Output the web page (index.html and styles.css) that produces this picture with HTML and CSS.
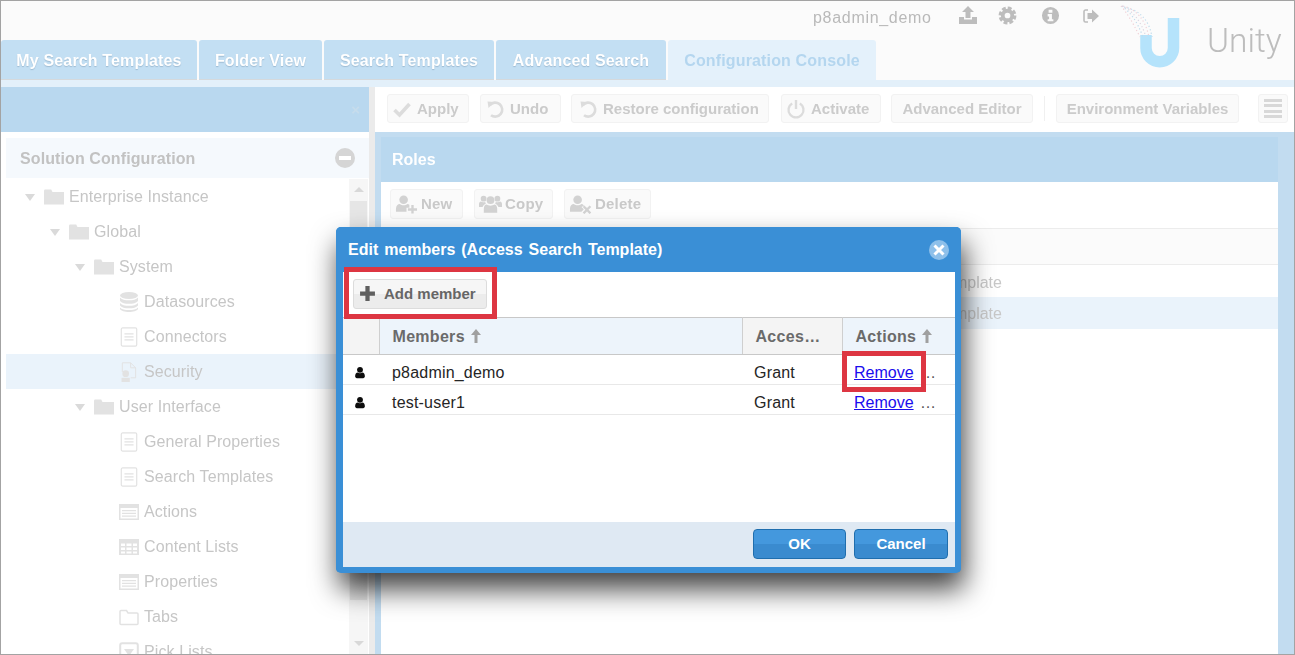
FILE: index.html
```html
<!DOCTYPE html>
<html lang="en">
<head>
<meta charset="utf-8">
<title>Unity - Edit members</title>
<link rel="stylesheet" href="styles.css">
</head>
<body>
<svg class="defs" width="0" height="0" aria-hidden="true">
  <symbol id="i-user" viewBox="0 0 16 16"><circle cx="8" cy="4.4" r="3.9"/><path d="M1.5 13c0-3 1.4-5 3.4-5 .8.7 1.9 1.1 3.1 1.1s2.300-.4 3.100-1.100c2 0 3.400 2 3.400 5 0 1.500-1 2.500-2.400 2.500H3.900c-1.400 0-2.400-1-2.400-2.500z"/></symbol>
  <symbol id="i-plus" viewBox="0 0 16 16"><path d="M6 1h4v5h5v4h-5v5H6v-5H1V6h5z"/></symbol>
  <symbol id="i-up" viewBox="0 0 12 16"><path d="M4.500 15V7H1l5-6 5 6H7.500v8z"/></symbol>
  <symbol id="i-upload" viewBox="0 0 20 20"><path d="M10 1l6 6h-3.500v6h-5V7H4z"/><path d="M1 12h5v2.500h8V12h5v7H1z"/></symbol>
  <symbol id="i-cog" viewBox="0 0 20 20"><circle cx="10" cy="10" r="5" fill="none" stroke="currentColor" stroke-width="4"/><circle cx="10" cy="10" r="7.700" fill="none" stroke="currentColor" stroke-width="3.400" stroke-dasharray="4 2.050"/></symbol>
  <symbol id="i-info" viewBox="0 0 20 20"><path fill-rule="evenodd" d="M10 1a9 9 0 1 1 0 18a9 9 0 0 1 0-18zM8 4v3h4V4zM7 8.500V11h1.500v3H7v2h6v-2h-1.500V8.500z"/></symbol>
  <symbol id="i-out" viewBox="0 0 20 20"><path d="M7 4H4.500C3.700 4 3 4.700 3 5.500v9c0 .8.7 1.500 1.500 1.500H7" fill="none" stroke="currentColor" stroke-width="1.600"/><path d="M11 3.500l7 6.500-7 6.500V13H6.500V7H11z"/></symbol>
  <symbol id="i-check" viewBox="0 0 20 20"><path d="M2.500 11l5 5 10-11" fill="none" stroke="currentColor" stroke-width="3.600"/></symbol>
  <symbol id="i-undo" viewBox="0 0 20 20"><path d="M4.800 6.200A7 7 0 1 1 6 16.200" fill="none" stroke="currentColor" stroke-width="2.600"/><path d="M2.500 2.500l7 .5-6 6z"/></symbol>
  <symbol id="i-power" viewBox="0 0 20 20"><path d="M6.200 4.500a7.500 7.500 0 1 0 7.600 0" fill="none" stroke="currentColor" stroke-width="2.300"/><path d="M8.800 1h2.400v9H8.800z"/></symbol>
  <symbol id="i-uplus" viewBox="0 0 24 20"><circle cx="9" cy="5.500" r="4.500"/><path d="M1 18v-3c0-3 2-5 4-5 1 .8 2.500 1.300 4 1.300s3-.5 4-1.300c.8 0 1.500.2 2 .7V14h-3v4z"/><path d="M17 11h2.500v3.500H23V17h-3.500v3H17v-3h-3.500v-2.500H17z"/></symbol>
  <symbol id="i-users" viewBox="0 0 24 20"><circle cx="12" cy="6" r="4"/><circle cx="4.800" cy="4.500" r="3"/><circle cx="19.200" cy="4.500" r="3"/><path d="M5 19v-4c0-3 1.500-4.500 3-4.500 1 .8 2.500 1.200 4 1.200s3-.4 4-1.200c1.500 0 3 1.500 3 4.500v4z"/><path d="M0 13V10c0-1.500 1-2.500 2-2.500 1 .7 3 .8 4.500.3.100.8.400 1.300.8 1.700C5.500 10.500 4 12 3.800 13zM24 13v-3c0-1.500-1-2.500-2-2.500-1 .7-3 .8-4.500.3-.1.8-.4 1.300-.8 1.700 1.800 1 3.300 2.500 3.500 3.500z"/></symbol>
  <symbol id="i-ux" viewBox="0 0 24 20"><circle cx="9" cy="5.500" r="4.500"/><path d="M1 18v-3c0-3 2-5 4-5 1 .8 2.500 1.300 4 1.300s3-.5 4-1.300c1 0 2 .7 2.600 1.800L13 13l2.500 2.500-2.500 2.500z"/><path d="M16 11.500l2.800 2.800 2.700-2.800 1.700 1.700-2.800 2.800 2.800 2.800-1.700 1.700-2.700-2.800-2.800 2.800-1.700-1.700 2.800-2.800-2.800-2.800z"/></symbol>
  <symbol id="i-folder" viewBox="0 0 20 18"><path d="M0 3c0-.8.500-1.500 1.200-1.500h6L8.500 4H20v12.500H0z"/></symbol>
  <symbol id="i-folder-o" viewBox="0 0 20 18"><path d="M1 15.500V3.500C1 3 1.300 2.500 2 2.500h5.500L9 5h9c.6 0 1 .4 1 1v9.500c0 .6-.4 1-1 1H2c-.7 0-1-.5-1-1z" fill="none" stroke="currentColor" stroke-width="1.500"/></symbol>
  <symbol id="i-db" viewBox="0 0 20 20"><ellipse cx="10" cy="3.500" rx="9" ry="3.500"/><path d="M1 5.500c1.500 2 5 2.800 9 2.800s7.500-.8 9-2.800V9c-1.500 2-5 2.800-9 2.800S2.500 11 1 9z"/><path d="M1 11c1.500 2 5 2.800 9 2.800s7.500-.8 9-2.800v2.500c-1.500 2-5 2.800-9 2.800s-7.500-.8-9-2.800z"/><path d="M1 15.500c1.500 2 5 2.500 9 2.500s7.500-.5 9-2.500V17c-1 2-5 3-9 3s-8-1-9-3z"/></symbol>
  <symbol id="i-doc" viewBox="0 0 20 22"><rect x="1.500" y="1" width="17" height="20" rx="1.500" fill="none" stroke="currentColor" stroke-width="1.300"/><path d="M5 7h10v1.300H5zM5 10.300h10v1.300H5zM5 13.600h10v1.300H5z"/></symbol>
  <symbol id="i-sec" viewBox="0 0 20 24"><path d="M2 1h10l6 6v12h-6M2 12V1M12 1v6h6" fill="none" stroke="currentColor" stroke-width="1.200"/><circle cx="6" cy="14" r="4"/><path d="M1 24v-5h10v5z"/></symbol>
  <symbol id="i-list" viewBox="0 0 20 18"><path fill-rule="evenodd" d="M0 1h20v16H0zM1.500 5v10.500h17V5zM3 7h14v1.200H3zM3 9.800h14V11H3zM3 12.500h14v1.200H3z"/></symbol>
  <symbol id="i-grid" viewBox="0 0 20 18"><path fill-rule="evenodd" d="M0 1h20v16H0zM2 5.500V8h4V5.500zM7.500 5.500V8h5V5.500zM14 5.500V8h4V5.500zM2 9.500V12h4V9.500zM7.500 9.500V12h5V9.500zM14 9.500V12h4V9.500zM2 13.500V15.500h4V13.500zM7.500 13.500V15.500h5V13.500zM14 13.500V15.500h4V13.500z"/></symbol>
  <symbol id="i-pick" viewBox="0 0 20 20"><rect x="1.200" y="1.200" width="17.600" height="17.600" rx="2" fill="none" stroke="currentColor" stroke-width="2"/><path d="M5 7h10l-5 7z"/></symbol>
</svg>

<div class="frame">
  <div class="page">
    <header class="header">
      <div class="topbar">
        <span class="user-name">p8admin_demo</span>
        <svg class="top-icon icon-upload"><use href="#i-upload"/></svg>
        <svg class="top-icon icon-cog"><use href="#i-cog"/></svg>
        <svg class="top-icon icon-info"><use href="#i-info"/></svg>
        <svg class="top-icon icon-out"><use href="#i-out"/></svg>
      </div>
      <nav class="tabs">
        <a class="tab tab-a">My Search Templates</a>
        <a class="tab tab-b">Folder View</a>
        <a class="tab tab-c">Search Templates</a>
        <a class="tab tab-d">Advanced Search</a>
        <a class="tab tab-active">Configuration Console</a>
      </nav>
      <div class="brand">
        <svg class="brand-mark" viewBox="0 0 70 70">
          <path class="brand-u" d="M54.500 17V47a13.750 13.750 0 0 1-27.500 0V34"/>
          <path class="dots d1" d="M2 5C8 12 13 20 21 36"/>
          <path class="dots d2" d="M3 5C12 12 18 20 24 36"/>
          <path class="dots d3" d="M3 5C14 10 22 20 27 36"/>
          <path class="dots d1" d="M4 5C18 9 26 18 30 36"/>
          <path class="dots d2" d="M5 6C20 9 30 18 33 36"/>
        </svg>
        <span class="brand-name">Unity</span>
      </div>
    </header>

    <main class="main">
      <aside class="side">
        <div class="side-head"><span class="side-close">&times;</span></div>
        <div class="sol-head"><span>Solution Configuration</span><span class="sol-toggle"></span></div>
        <div class="side-body">
          <ul class="tree">
            <li class="node l0"><i class="caret"></i><svg class="ti"><use href="#i-folder"/></svg>Enterprise Instance</li>
            <li class="node l1"><i class="caret"></i><svg class="ti"><use href="#i-folder"/></svg>Global</li>
            <li class="node l2"><i class="caret"></i><svg class="ti"><use href="#i-folder"/></svg>System</li>
            <li class="node l3"><i class="nocaret"></i><svg class="ti"><use href="#i-db"/></svg>Datasources</li>
            <li class="node l3"><i class="nocaret"></i><svg class="ti"><use href="#i-doc"/></svg>Connectors</li>
            <li class="node l3 selected"><i class="nocaret"></i><svg class="ti"><use href="#i-sec"/></svg>Security</li>
            <li class="node l2"><i class="caret"></i><svg class="ti"><use href="#i-folder"/></svg>User Interface</li>
            <li class="node l3"><i class="nocaret"></i><svg class="ti"><use href="#i-doc"/></svg>General Properties</li>
            <li class="node l3"><i class="nocaret"></i><svg class="ti"><use href="#i-doc"/></svg>Search Templates</li>
            <li class="node l3"><i class="nocaret"></i><svg class="ti"><use href="#i-list"/></svg>Actions</li>
            <li class="node l3"><i class="nocaret"></i><svg class="ti"><use href="#i-grid"/></svg>Content Lists</li>
            <li class="node l3"><i class="nocaret"></i><svg class="ti"><use href="#i-list"/></svg>Properties</li>
            <li class="node l3"><i class="nocaret"></i><svg class="ti"><use href="#i-folder-o"/></svg>Tabs</li>
            <li class="node l3"><i class="nocaret"></i><svg class="ti"><use href="#i-pick"/></svg>Pick Lists</li>
          </ul>
          <div class="scrollbar">
            <i class="sb-up"></i>
            <div class="sb-thumb"></div>
            <i class="sb-down"></i>
          </div>
        </div>
      </aside>
      <div class="splitter"></div>
      <section class="content">
        <div class="toolbar">
          <button class="tb tb-apply"><svg class="tb-i"><use href="#i-check"/></svg>Apply</button>
          <button class="tb tb-undo"><svg class="tb-i"><use href="#i-undo"/></svg>Undo</button>
          <button class="tb tb-restore"><svg class="tb-i"><use href="#i-undo"/></svg>Restore configuration</button>
          <button class="tb tb-activate"><svg class="tb-i"><use href="#i-power"/></svg>Activate</button>
          <button class="tb tb-adv">Advanced Editor</button>
          <span class="tb-sep"></span>
          <button class="tb tb-env">Environment Variables</button>
          <button class="tb tb-menu"><span class="bars"></span></button>
        </div>
        <div class="roles">
          <h2 class="roles-head">Roles</h2>
          <div class="roles-body">
            <div class="roles-actions">
              <button class="rb rb-new"><svg class="rb-i"><use href="#i-uplus"/></svg>New</button>
              <button class="rb rb-copy"><svg class="rb-i"><use href="#i-users"/></svg>Copy</button>
              <button class="rb rb-del"><svg class="rb-i"><use href="#i-ux"/></svg>Delete</button>
            </div>
            <div class="roles-hdr"></div>
            <div class="roles-row"><span>Template</span></div>
            <div class="roles-row sel"><span>Template</span></div>
          </div>
        </div>
      </section>
    </main>
  </div>

  <div class="modal" role="dialog">
    <div class="modal-title">
      <span>Edit members (Access Search Template)</span>
      <svg class="modal-close" viewBox="0 0 20 20"><circle cx="10" cy="10" r="10"/><path d="M5.500 5.500l9 9M14.500 5.500l-9 9"/></svg>
    </div>
    <div class="modal-tools">
      <button class="add-btn"><svg class="add-i"><use href="#i-plus"/></svg>Add member</button>
    </div>
    <table class="members">
      <colgroup><col class="c0"><col class="c1"><col class="c2"><col class="c3"></colgroup>
      <thead>
        <tr>
          <th class="th-plain"></th>
          <th class="th-sort">Members <svg class="sort-i"><use href="#i-up"/></svg></th>
          <th class="th-plain">Acces…</th>
          <th class="th-sort">Actions <svg class="sort-i"><use href="#i-up"/></svg></th>
        </tr>
      </thead>
      <tbody>
        <tr>
          <td><svg class="u-i"><use href="#i-user"/></svg></td>
          <td>p8admin_demo</td>
          <td class="td-grant">Grant</td>
          <td class="td-act"><a class="link" href="#">Remove</a> <span class="more">…</span></td>
        </tr>
        <tr>
          <td><svg class="u-i"><use href="#i-user"/></svg></td>
          <td>test-user1</td>
          <td class="td-grant">Grant</td>
          <td class="td-act"><a class="link" href="#">Remove</a> <span class="more">…</span></td>
        </tr>
      </tbody>
    </table>
    <div class="modal-foot">
      <button class="pri pri-ok">OK</button>
      <button class="pri pri-cancel">Cancel</button>
    </div>
  </div>

  <div class="callout callout-add"></div>
  <div class="callout callout-remove"></div>
</div>
</body>
</html>
```

FILE: styles.css
```css
* { box-sizing: border-box; }
html, body { margin: 0; padding: 0; }
body { font-family: "Liberation Sans", Arial, sans-serif; font-size: 16px; background: #fff; }
.defs { position: absolute; }
button { font-family: inherit; }
svg { fill: currentColor; display: block; }

.frame { position: relative; width: 1295px; height: 655px; border: 1px solid #a3a3a3; overflow: hidden; background: #fff; }
.page { display: flex; flex-direction: column; height: 100%; filter: blur(.35px); }

/* header */
.header { position: relative; flex: none; height: 79px; background: #fbfbfb; display: flex; flex-direction: column; }
.topbar { height: 39px; display: flex; align-items: flex-start; padding: 8px 0 0 812px; color: #bdbdbd; }
.user-name { font-size: 16px; letter-spacing: .7px; color: #b9b9b9; width: 118px; line-height: 18px; margin-right: 27px; white-space: nowrap; }
.top-icon { flex: none; }
.icon-upload { width: 20px; height: 20px; margin-right: 20px; margin-top: -4px; }
.icon-cog { width: 19px; height: 19px; margin-right: 24px; margin-top: -3px; }
.icon-info { width: 19px; height: 19px; margin-right: 21px; margin-top: -3px; }
.icon-out { width: 20px; height: 20px; margin-top: -3px; }
.tabs { display: flex; gap: 2px; height: 40px; }
.tab { height: 40px; display: flex; align-items: center; justify-content: center; padding-top: 2px; background: #c3dff3; border-radius: 3px 3px 0 0; color: #fff; font-weight: 700; font-size: 16px; letter-spacing: .15px; text-shadow: 0 1px 1px rgba(90,120,150,.35); box-shadow: inset 0 -1px 0 #d5d9dc; }
.tab-a { width: 196px; }
.tab-b { width: 123px; }
.tab-c { width: 170px; }
.tab-d { width: 170px; }
.tab-active { width: 208px; background: #e4f1fb; color: #b4d6ef; text-shadow: none; box-shadow: none; }
.brand { position: absolute; right: 0; top: 0; width: 175px; height: 79px; }
.brand-mark { position: absolute; left: 0; top: 0; width: 70px; height: 70px; }
.brand-u { fill: none; stroke: #b5e3fb; stroke-width: 11.500; }
.dots { fill: none; stroke-width: 1.200; stroke-dasharray: 1.200 2.400; }
.d1 { stroke: #f0d0d6; }
.d2 { stroke: #c0dcec; }
.d3 { stroke: #dcd6e2; }
.brand-name { position: absolute; left: 88px; top: 20px; font-family: Roboto, sans-serif; font-weight: 300; font-size: 33.500px; line-height: 40px; color: #bdbdbd; white-space: nowrap; }

/* main */
.main { flex: 1; min-height: 0; display: flex; background: #e3f0fa; padding-top: 7px; overflow: hidden; }
.side { width: 368px; flex: none; background: #fff; display: flex; flex-direction: column; }
.side-head { height: 45px; flex: none; background: #b9d8ef; display: flex; align-items: center; justify-content: flex-end; padding-right: 9px; }
.side-close { color: #c6dcec; font-size: 15px; font-weight: 700; }
.sol-head { flex: none; height: 40px; margin: 6px 0 1px 5px; padding: 2px 14px 0 14px; background: #f5f9fd; color: #c2c2c2; font-weight: 700; font-size: 16px; display: flex; align-items: center; justify-content: space-between; letter-spacing: .1px; }
.sol-toggle { width: 20px; height: 20px; border-radius: 50%; background: #d5d5d5; position: relative; margin-top: -2px; }
.sol-toggle::after { content: ""; position: absolute; left: 4px; right: 4px; top: 8px; height: 4px; background: #fff; }
.side-body { flex: 1; min-height: 0; display: flex; padding-left: 5px; overflow: hidden; }
.tree { list-style: none; margin: 0; padding: 0; width: 343px; flex: none; }
.node { height: 35px; display: flex; align-items: center; color: #c6c6c6; font-size: 16px; letter-spacing: .1px; white-space: nowrap; }
.node.selected { background: #eaf3fb; }
.l0 { padding-left: 19px; }
.l1 { padding-left: 44px; }
.l2 { padding-left: 69px; }
.l3 { padding-left: 94px; }
.caret, .nocaret { width: 19px; flex: none; display: block; }
.caret::before { content: ""; display: block; width: 0; height: 0; border: 5px solid transparent; border-top: 7px solid #dadada; border-bottom: 0; margin-top: 1px; }
.ti { width: 20px; height: 20px; flex: none; margin-right: 5px; color: #e2e2e2; }
.scrollbar { width: 19px; flex: none; background: #f6f6f6; display: flex; flex-direction: column; align-items: center; }
.sb-up { flex: none; width: 0; height: 0; margin: 8px 0 9px; border: 5px solid transparent; border-bottom: 5px solid #d8d8d8; border-top: 0; }
.sb-thumb { flex: none; width: 17px; height: 399px; background: #e6e6e6; }
.sb-down { flex: none; width: 0; height: 0; margin-top: 41px; border: 5px solid transparent; border-top: 5px solid #d8d8d8; border-bottom: 0; }
.splitter { width: 6px; flex: none; background: #ebebeb; }

/* right */
.content { flex: 1; min-width: 0; background: #c2dcf0; display: flex; flex-direction: column; }
.toolbar { flex: none; height: 45px; background: #fff; display: flex; align-items: center; padding: 0 0 2px 12px; }
.tb { flex: none; height: 29px; border: 1px solid #f2f2f2; border-radius: 3px; background: #fafafa; color: #cbcbcb; font-size: 15px; font-weight: 700; display: flex; align-items: center; justify-content: center; padding: 0; margin-right: 10px; white-space: nowrap; }
.tb-i { width: 20px; height: 20px; flex: none; margin-right: 5px; color: #dcdcdc; }
.tb-apply { width: 82px; margin-right: 11px; justify-content: flex-start; padding-left: 4px; }
.tb-undo { width: 81px; justify-content: flex-start; padding-left: 4px; }
.tb-restore { width: 198px; margin-right: 12px; justify-content: flex-start; padding-left: 6px; }
.tb-activate { width: 100px; justify-content: flex-start; padding-left: 4px; }
.tb-adv { width: 142px; margin-right: 11px; }
.tb-sep { flex: none; width: 1px; height: 25px; background: #f0f0f0; margin-right: 11px; }
.tb-env { width: 183px; margin-right: 19px; }
.tb-menu { width: 30px; margin-right: 0; }
.bars { display: block; width: 18px; height: 19px; background: repeating-linear-gradient(#d8d8d8 0 3px, transparent 3px 5.300px); }

.roles { flex: 1; min-height: 0; margin: 5px 16px 0 6px; background: #fff; display: flex; flex-direction: column; }
.roles-head { flex: none; margin: 0; height: 45px; background: #b9d8ef; color: #fff; font-size: 16px; font-weight: 700; display: flex; align-items: center; padding-left: 11px; }
.roles-actions { height: 46px; display: flex; align-items: center; gap: 11px; padding: 0 0 2px 9px; }
.rb { flex: none; height: 30px; border: 1px solid #f2f2f2; border-radius: 3px; background: #fafafa; color: #c9c9c9; font-size: 15px; font-weight: 700; letter-spacing: .2px; display: flex; align-items: center; padding: 0 0 2px 4px; white-space: nowrap; }
.rb-new { width: 73px; }
.rb-copy { width: 79px; }
.rb-del { width: 87px; }
.rb-i { width: 23px; height: 20px; margin: 2px 3px 0 0; color: #d2d2d2; }
.roles-hdr { height: 37px; background: #fbfbfb; border-top: 1px solid #ececec; border-bottom: 1px solid #ececec; }
.roles-row { height: 32px; display: flex; align-items: center; padding: 3px 0 0 556px; color: #c8c8c8; font-size: 16px; }
.roles-row.sel { background: #eaf3fb; padding-top: 1px; }

/* modal */
.modal { position: absolute; left: 335px; top: 226px; width: 625px; height: 346px; background: #fff; border: solid #3a8fd6; border-width: 0 6px 6px 7px; border-radius: 5px; box-shadow: 3px 16px 28px rgba(0,0,0,.75); display: flex; flex-direction: column; }
.modal-title { flex: none; height: 45px; margin: 0 -6px 0 -7px; padding: 0 12px; background: #3a8fd6; border-radius: 5px 5px 0 0; color: #fff; font-weight: 700; font-size: 16px; word-spacing: 1.500px; display: flex; align-items: center; justify-content: space-between; white-space: nowrap; }
.modal-close { width: 20px; height: 20px; fill: #8ec0ea; }
.modal-close path { fill: none; stroke: #fff; stroke-width: 3; }
.modal-tools { flex: none; height: 45px; display: flex; align-items: center; padding: 0 0 2px 10px; }
.add-btn { width: 134px; height: 30px; display: flex; align-items: center; padding: 0 0 0 5px; border: 1px solid #dcdcdc; border-radius: 3px; background: linear-gradient(#f6f6f6 0 50%, #ececec 50% 100%); color: #666; font-size: 15px; font-weight: 700; white-space: nowrap; }
.add-i { width: 17px; height: 17px; margin-right: 8px; color: #5f5f5f; }
.members { flex: none; width: 612px; border-collapse: collapse; table-layout: fixed; font-size: 16px; color: #252525; }
.c0 { width: 36px; }
.c1 { width: 363px; }
.c2 { width: 100px; }
.c3 { width: 113px; }
.members th { height: 37px; padding: 2px 0 0 13px; text-align: left; color: #6a6a6a; font-size: 16px; letter-spacing: .3px; border-top: 1px solid #c8c8c8; border-bottom: 1px solid #c8c8c8; border-right: 1px solid #cfcfcf; white-space: nowrap; }
.members th:last-child { border-right: 0; }
.th-plain { background: #f4f4f4; }
.th-sort { background: #edf4fb; }
.sort-i { display: inline-block; width: 12px; height: 16px; color: #a0a0a0; vertical-align: -2px; }
.members td { height: 30px; padding: 6px 0 0 13px; letter-spacing: .2px; border-bottom: 1px solid #e8e8e8; white-space: nowrap; overflow: hidden; }
.members td.td-grant { padding-left: 12px; }
.members td.td-act { padding-left: 12px; letter-spacing: 0; }
.members td:first-child { padding-left: 11px; }
.u-i { width: 12px; height: 13px; color: #0c0c0c; }
.link { color: #1a0dee; text-decoration: underline; }
.more { margin-left: 2px; color: #555; }
.modal-foot { margin-top: auto; flex: none; height: 45px; background: #dfe9f3; display: flex; align-items: center; justify-content: flex-end; gap: 8px; padding: 0 7px 2px 0; }
.pri { height: 30px; border: 1px solid #1f6eae; border-radius: 4px; background: linear-gradient(#4498dd 0 50%, #3a8bcf 50% 100%); color: #fff; font-size: 15px; font-weight: 700; padding: 0; }
.pri-ok { width: 93px; }
.pri-cancel { width: 94px; }

/* call-outs */
.callout { position: absolute; border: 5px solid #dd3642; pointer-events: none; }
.callout-add { left: 343px; top: 266px; width: 153px; height: 52px; }
.callout-remove { left: 841px; top: 350px; width: 84px; height: 41px; }
```
